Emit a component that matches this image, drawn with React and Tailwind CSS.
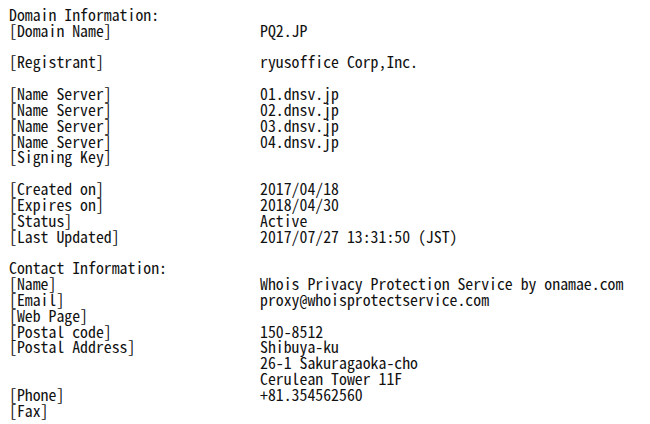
const rows = [
  ["Domain Information:", null],
  ["[Domain Name]", "PQ2.JP"],
  ["", ""],
  ["[Registrant]", "ryusoffice Corp,Inc."],
  ["", ""],
  ["[Name Server]", "01.dnsv.jp"],
  ["[Name Server]", "02.dnsv.jp"],
  ["[Name Server]", "03.dnsv.jp"],
  ["[Name Server]", "04.dnsv.jp"],
  ["[Signing Key]", ""],
  ["", ""],
  ["[Created on]", "2017/04/18"],
  ["[Expires on]", "2018/04/30"],
  ["[Status]", "Active"],
  ["[Last Updated]", "2017/07/27 13:31:50 (JST)"],
  ["", ""],
  ["Contact Information:", null],
  ["[Name]", "Whois Privacy Protection Service by onamae.com"],
  ["[Email]", "proxy@whoisprotectservice.com"],
  ["[Web Page]", ""],
  ["[Postal code]", "150-8512"],
  ["[Postal Address]", "Shibuya-ku"],
  ["", "26-1 Sakuragaoka-cho"],
  ["", "Cerulean Tower 11F"],
  ["[Phone]", "+81.354562560"],
  ["[Fax]", ""],
];

export default function App() {
  return (
    <div
      className="w-[650px] h-[424px] bg-white text-[#111] overflow-hidden pl-[9px] pt-[7px] text-[15.8px] leading-[15.84px]"
      style={{ fontFamily: '"Noto Sans Mono CJK JP", "DejaVu Sans Mono", monospace' }}
    >
      <div className="flex flex-col">
        {rows.map(([label, value], i) => (
          <div key={i} className="flex h-[15.84px] whitespace-pre">
            {value === null ? (
              <span>{label}</span>
            ) : (
              <>
                <span className="w-[251px] shrink-0">{label}</span>
                <span>{value}</span>
              </>
            )}
          </div>
        ))}
      </div>
    </div>
  );
}
